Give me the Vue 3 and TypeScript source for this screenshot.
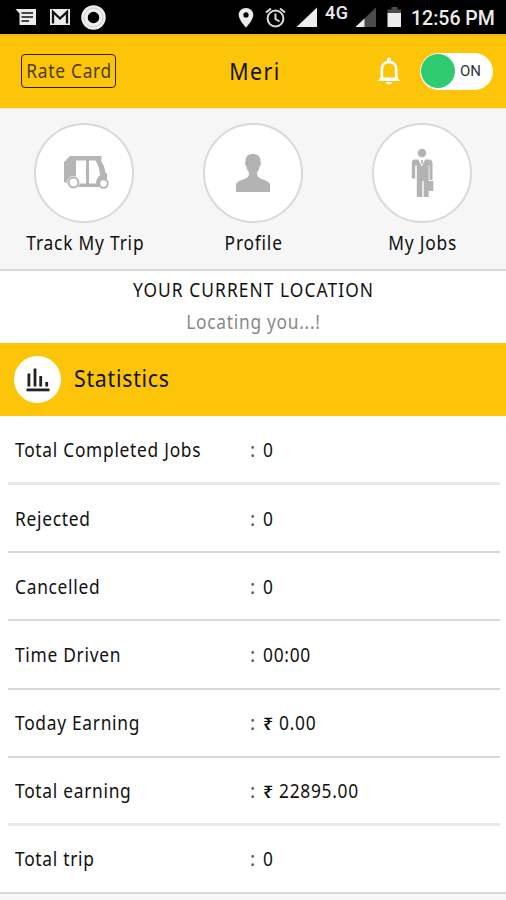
<script setup lang="ts">
interface Stat {
  label: string
  value: string
  currency?: string
  heavy?: boolean
}

const stats: Stat[] = [
  { label: 'Total Completed Jobs', value: '0', heavy: true },
  { label: 'Rejected', value: '0' },
  { label: 'Cancelled', value: '0' },
  { label: 'Time Driven', value: '00:00' },
  { label: 'Today Earning', currency: '₹', value: '0.00' },
  { label: 'Total earning', currency: '₹', value: '22895.00', heavy: true },
  { label: 'Total trip', value: '0' },
]
</script>

<template>
  <main class="screen">
    <header class="status">
      <svg class="tray" width="112" height="34" viewBox="0 0 112 34">
        <path fill="#ececec" d="M15.500 9H36v16H19.500V13.500z" />
        <path stroke="#111" stroke-width="1.700" d="M21.500 13H33M21.500 17H33M21.500 21H29" />
        <path fill="#ececec" d="M50 9h20v16H50z" />
        <path fill="none" stroke="#111" stroke-width="2.300" d="M53 23.500V12l7 6.500 7-6.500v11.500" />
        <circle cx="93.500" cy="17.500" r="9" fill="none" stroke="#eee" stroke-width="6.500" />
        <circle cx="93.500" cy="17.500" r="9.500" fill="none" stroke="#c4c4c4" stroke-width=".8" />
      </svg>
      <svg class="signals" width="180" height="34" viewBox="230 0 180 34">
        <path fill="#ececec" fill-rule="evenodd" d="M246 8c-4.200 0-7.300 3-7.300 7 0 5 7.300 12.500 7.300 12.500s7.300-7.500 7.300-12.500c0-4-3.100-7-7.300-7zm0 4.300a2.600 2.600 0 1 1 0 5.200 2.600 2.600 0 0 1 0-5.200z" />
        <g fill="none" stroke="#dcdcdc" stroke-width="2">
          <circle cx="275.500" cy="18.500" r="7.900" />
          <path d="M275.500 13.500v5.500l4 2.500M266 12.500l5-4M285 12.500l-5-4" />
        </g>
        <path fill="#ececec" d="M317 7.500V27h-20.500z" />
        <path fill="#4c4c4c" d="M376 7.500V27h-20.500z" />
        <path fill="#ececec" d="M364.500 18.500V27h-9z" />
        <path fill="#4c4c4c" d="M391.500 7h6v2.500h3.500V14h-13.500V9.500h4z" />
        <path fill="#ececec" d="M387.500 13H401v14h-13.500z" />
      </svg>
      <span class="network">4G</span>
      <span class="clock">12:56 PM</span>
    </header>

    <nav class="bar">
      <button class="rate"><span class="t">Rate Card</span></button>
      <h1 class="title"><span class="t">Meri</span></h1>
      <svg class="bell" width="24" height="28" viewBox="0 0 24 28">
        <path fill="none" stroke="#fff" stroke-width="2.700" d="M4.800 22.500V12.500c0-4.600 2.800-7.700 7.200-7.700s7.200 3.100 7.200 7.700v10" />
        <path fill="#fff" d="M10 .8h4V5h-4zM4 20.500h16l3.500 3.500H.5zM9 25h6c0 3.200-6 3.200-6 0z" />
      </svg>
      <div class="toggle">
        <span class="knob"></span>
        <span class="state">ON</span>
      </div>
    </nav>

    <section class="menu">
      <a class="tile">
        <span class="disc">
          <svg class="rickshaw" width="46" height="34" viewBox="0 0 46 34">
            <path fill="#b5b5b5" d="M7 0H38.500V3.500H37.500q4 6 5 13l1.500 1V24L40 31H11L1 26V6z" />
            <path fill="#fff" d="M13 4.500h10V27.500H17L13 20.500zM26 4.500h6.500q4 6 4.500 15-3.500 1.500-4 8h-7z" />
            <circle cx="10.500" cy="26.500" r="6.500" fill="#fff" />
            <circle cx="10.500" cy="26.500" r="4.900" fill="#fff" stroke="#b5b5b5" stroke-width="2" />
            <circle cx="40.500" cy="27.500" r="4.200" fill="#fff" stroke="#b5b5b5" stroke-width="2" />
          </svg>
        </span>
        <span class="t">Track My Trip</span>
      </a>
      <a class="tile">
        <span class="disc">
          <svg width="36" height="40" viewBox="0 0 36 40">
            <path fill="#b3b3b3" d="M18 1c5 0 8 3 7.500 8 .8.500.5 3.500-.8 4.500-.5 2.800-1.700 4.500-2.700 6 0 3 .5 4.500 3 5.700 4 2 8 2.300 10 5.800V39H1v-8c2-3.500 6-3.800 10-5.800 2.500-1.200 3-2.700 3-5.700-1-1.500-2.200-3.200-2.700-6-1.300-1-1.600-4-.8-4.500C10 4 13 1 18 1z" />
          </svg>
        </span>
        <span class="t">Profile</span>
      </a>
      <a class="tile">
        <span class="disc">
          <svg width="24" height="50" viewBox="0 0 24 50">
            <g fill="#b3b3b3">
              <circle cx="12" cy="5" r="4.300" />
              <path d="M5 11.500h3.200l3.500 7 3.500-7H19q3.500 0 3.500 4V32H19.500V17.500h-.8V49h-5V33h-1.400v16H6.800V17.500H5.200V30.500H1.800v-15q0-4 3.200-4z" />
              <path d="M17.500 33h5.800v10h-5.800z" />
              <path d="M11 12h1.500l.5 3-1 1.500-1-1.500z" />
            </g>
          </svg>
        </span>
        <span class="t">My Jobs</span>
      </a>
    </section>

    <section class="location">
      <h2 class="place"><span class="t">YOUR CURRENT LOCATION</span></h2>
      <p class="locating"><span class="t">Locating you...!</span></p>
    </section>

    <div class="heading">
      <span class="badge">
        <svg width="24" height="24" viewBox="0 0 24 24">
          <path fill="none" stroke="#222" stroke-width="2.800" d="M2.900 18.500V5.500M9 18.500V.5M14.700 18.500V8M20.700 18.500V14" />
          <path fill="#222" d="M.5 20.500h23v2.800H.5z" />
        </svg>
      </span>
      <h2 class="stats-title"><span class="t">Statistics</span></h2>
    </div>

    <section class="stats">
      <div v-for="s in stats" :key="s.label" class="row" :class="{ heavy: s.heavy }">
        <span class="label"><span class="t">{{ s.label }}</span></span>
        <span class="colon">:</span>
        <span class="value"><span v-if="s.currency" class="currency">{{ s.currency }}</span><span class="t">{{ s.value }}</span></span>
      </div>
    </section>
  </main>
</template>

<style>
body {
  background: #f6f6f6;
}
</style>

<style scoped>
.screen {
  width: 506px;
  height: 900px;
  overflow: hidden;
  display: flex;
  flex-direction: column;
  background: #f6f6f6;
  color: #111;
  font: 19.5px/24px 'Noto Sans', sans-serif;
}
.screen * {
  box-sizing: border-box;
}
h1,
h2,
p {
  margin: 0;
  font: inherit;
}
svg {
  display: block;
  flex: none;
}
.t {
  display: inline-block;
  white-space: nowrap;
  letter-spacing: 0.8px;
  transform: scaleX(0.89);
}
.status {
  height: 34px;
  flex: none;
  display: flex;
  background: #000;
  position: relative;
  color: #ececec;
  font-family: Roboto, sans-serif;
}
.signals {
  margin-left: 118px;
}
.network {
  position: absolute;
  left: 325px;
  top: 3px;
  font-size: 18px;
  line-height: 20px;
  font-weight: 500;
  letter-spacing: 0.6px;
}
.clock {
  margin-left: 1px;
  padding-top: 7px;
  font-size: 19.5px;
  font-weight: 500;
  white-space: nowrap;
}
.bar {
  height: 75px;
  flex: none;
  display: grid;
  grid-template-columns: 95px 1fr 24px 73px;
  align-items: center;
  padding: 0 13px 0 21px;
  background: linear-gradient(#e8b40c, #fdc50a 3px);
  border-bottom: 1px solid #fbeccb;
}
.rate {
  height: 34px;
  padding: 0 0 0 2px;
  border: 1.500px solid #2b2205;
  border-radius: 4px;
  background: none;
  color: #4d3d08;
  font: inherit;
  display: flex;
  align-items: center;
  justify-content: center;
}
.title {
  font-size: 24px;
  justify-self: center;
  margin-right: 2px;
}
.title .t {
  letter-spacing: 1.600px;
}
.bell {
  margin-left: -19px;
}
.toggle {
  width: 73px;
  height: 37px;
  border-radius: 19px;
  background: #fff;
  display: flex;
  align-items: center;
}
.knob {
  width: 34px;
  height: 34px;
  margin-left: 1px;
  border-radius: 50%;
  background: #2ecb70;
}
.state {
  margin-left: 5px;
  color: #333;
  font: 15px/20px Roboto, sans-serif;
}
.menu {
  height: 162px;
  flex: none;
  display: grid;
  grid-template-columns: repeat(3, 168.667px);
  border-bottom: 2px solid #d8d8d8;
}
.tile {
  display: flex;
  flex-direction: column;
  align-items: center;
  padding-top: 14px;
}
.tile .t {
  margin-left: 2px;
  letter-spacing: 0.900px;
}
.disc {
  width: 100px;
  height: 100px;
  margin-bottom: 8px;
  border: 2px solid #d9d9d9;
  border-radius: 50%;
  background: #fff;
  display: flex;
  align-items: center;
  justify-content: center;
}
.rickshaw {
  margin-left: 3px;
}
.location {
  height: 72px;
  flex: none;
  background: #fff;
  text-align: center;
  padding-top: 7px;
}
.place .t {
  letter-spacing: 1.200px;
}
.locating {
  margin-top: 8px;
  padding-left: 2px;
  color: #888;
}
.heading {
  height: 73px;
  flex: none;
  display: flex;
  align-items: center;
  padding-left: 14px;
  background: #fdc50a;
}
.badge {
  width: 47px;
  height: 47px;
  border-radius: 50%;
  background: #fff;
  display: flex;
  align-items: center;
  justify-content: center;
}
.stats-title {
  margin-left: 13px;
  margin-bottom: 3px;
  font-size: 24px;
}
.stats-title .t,
.label .t,
.value .t {
  transform-origin: left;
}
.stats {
  flex: none;
  background: #fff;
  border-bottom: 2px solid #d8d8d8;
}
.row {
  height: 68.200px;
  margin: 0 6px 0 8px;
  padding: 1px 0 0 7px;
  border-bottom: 2px solid #d8d8d8;
  display: grid;
  grid-template-columns: 242px 13px 1fr;
  align-items: center;
}
.row.heavy {
  padding-top: 2px;
  border-bottom: 3px solid #e9e9e9;
}
.row:first-child {
  height: 69px;
}
.row:last-child {
  height: 66px;
  border-bottom: 0;
}
.colon {
  margin-left: -7px;
  color: #555;
}
.value {
  margin-left: -7px;
  display: flex;
}
.currency {
  width: 16px;
  font-size: 18px;
  font-weight: 600;
}
</style>
